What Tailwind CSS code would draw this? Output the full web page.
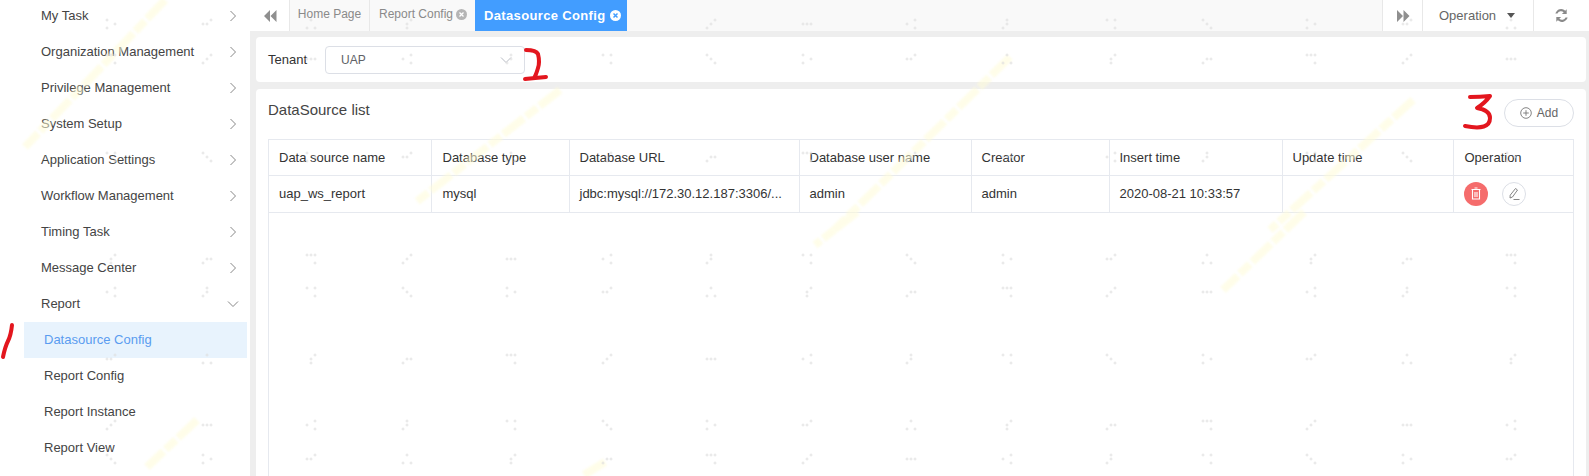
<!DOCTYPE html>
<html lang="en">
<head>
    <meta charset="UTF-8">
    <title>Datasource Config</title>
    <script src="https://cdn.jsdelivr.net/npm/@tailwindcss/browser@4"></script>
</head>
<body class="relative h-[476px] w-[1589px] overflow-hidden bg-[#eeeeee] font-['Liberation_Sans',Arial,sans-serif] text-[13px] text-[#333333]">
    <div class="flex h-[476px]">
        <!-- sidebar -->
        <aside class="w-[250px] shrink-0 overflow-hidden bg-white text-[#444444]">
            <ul class="-mt-[2px] pr-[3px]">
                <li class="flex h-[36px] items-center justify-between pl-[41px] pr-[8px]">My Task<svg class="h-[12px] w-[12px]" viewBox="0 0 12 12"><path d="M3.500 1l5 5-5 5" fill="none" stroke="#888" stroke-width="1"/></svg></li>
                <li class="flex h-[36px] items-center justify-between pl-[41px] pr-[8px]">Organization Management<svg class="h-[12px] w-[12px]" viewBox="0 0 12 12"><path d="M3.500 1l5 5-5 5" fill="none" stroke="#888" stroke-width="1"/></svg></li>
                <li class="flex h-[36px] items-center justify-between pl-[41px] pr-[8px]">Privilege Management<svg class="h-[12px] w-[12px]" viewBox="0 0 12 12"><path d="M3.500 1l5 5-5 5" fill="none" stroke="#888" stroke-width="1"/></svg></li>
                <li class="flex h-[36px] items-center justify-between pl-[41px] pr-[8px]">System Setup<svg class="h-[12px] w-[12px]" viewBox="0 0 12 12"><path d="M3.500 1l5 5-5 5" fill="none" stroke="#888" stroke-width="1"/></svg></li>
                <li class="flex h-[36px] items-center justify-between pl-[41px] pr-[8px]">Application Settings<svg class="h-[12px] w-[12px]" viewBox="0 0 12 12"><path d="M3.500 1l5 5-5 5" fill="none" stroke="#888" stroke-width="1"/></svg></li>
                <li class="flex h-[36px] items-center justify-between pl-[41px] pr-[8px]">Workflow Management<svg class="h-[12px] w-[12px]" viewBox="0 0 12 12"><path d="M3.500 1l5 5-5 5" fill="none" stroke="#888" stroke-width="1"/></svg></li>
                <li class="flex h-[36px] items-center justify-between pl-[41px] pr-[8px]">Timing Task<svg class="h-[12px] w-[12px]" viewBox="0 0 12 12"><path d="M3.500 1l5 5-5 5" fill="none" stroke="#888" stroke-width="1"/></svg></li>
                <li class="flex h-[36px] items-center justify-between pl-[41px] pr-[8px]">Message Center<svg class="h-[12px] w-[12px]" viewBox="0 0 12 12"><path d="M3.500 1l5 5-5 5" fill="none" stroke="#888" stroke-width="1"/></svg></li>
                <li class="flex h-[36px] items-center justify-between pl-[41px] pr-[8px]">Report<svg class="h-[12px] w-[12px]" viewBox="0 0 12 12"><path d="M1 3.500l5 5 5-5" fill="none" stroke="#888" stroke-width="1"/></svg></li>
                <li class="ml-[24px] flex h-[36px] items-center bg-[#e8f3fd] pl-[20px] text-[#5a9cf0]">Datasource Config</li>
                <li class="ml-[24px] flex h-[36px] items-center pl-[20px]">Report Config</li>
                <li class="ml-[24px] flex h-[36px] items-center pl-[20px]">Report Instance</li>
                <li class="ml-[24px] flex h-[36px] items-center pl-[20px]">Report View</li>
            </ul>
        </aside>

        <main class="flex min-w-0 flex-1 flex-col">
            <!-- tab bar -->
            <div class="flex h-[31px] shrink-0 items-stretch bg-[#f9f9f9] text-[12px] text-[#8a8a8a]">
                <div class="flex w-[39px] items-center justify-center bg-white">
                    <svg class="h-[12px] w-[14px]" viewBox="0 0 14 12"><path d="M7 0v12L1 6zM13.500 0v12l-6-6z" fill="#8f8f8f"/></svg>
                </div>
                <div class="flex w-[80px] items-center justify-center border-l border-[#e8e8e8] pb-[3px]">Home Page</div>
                <div class="flex w-[106px] items-center gap-[3px] border-l border-[#e8e8e8] pb-[3px] pl-[9px]">Report Config
                    <svg class="h-[11px] w-[11px]" viewBox="0 0 11 11"><circle cx="5.500" cy="5.500" r="5.500" fill="#b5b5b5"/><path d="M3.500 3.500l4 4M7.500 3.500l-4 4" stroke="#fff" stroke-width="1.300"/></svg>
                </div>
                <div class="flex w-[152px] items-center gap-[4px] bg-[#429dff] pl-[9px] text-[13px] font-bold tracking-[0.35px] text-white">Datasource Config
                    <svg class="h-[11px] w-[11px]" viewBox="0 0 11 11"><circle cx="5.500" cy="5.500" r="5.500" fill="#fff"/><path d="M3.500 3.500l4 4M7.500 3.500l-4 4" stroke="#429dff" stroke-width="1.500"/></svg>
                </div>
                <div class="flex-1"></div>
                <div class="flex w-[40px] items-center justify-center border-l border-[#e8e8e8] bg-white">
                    <svg class="h-[12px] w-[14px]" viewBox="0 0 14 12"><path d="M1 0v12l6-6zM7.500 0v12l6-6z" fill="#8f8f8f"/></svg>
                </div>
                <div class="flex w-[111px] items-center gap-[11px] border-l border-[#e8e8e8] bg-white pl-[16px] text-[13px] text-[#666666]">Operation
                    <svg class="h-[5px] w-[8px]" viewBox="0 0 8 5"><path d="M0 0h8L4 5z" fill="#555"/></svg>
                </div>
                <div class="flex w-[56px] items-center justify-center border-l border-[#e8e8e8] bg-white">
                    <svg class="h-[15px] w-[15px]" viewBox="0 0 13 13"><path d="M11 1v4.200H6.800l1.600-1.500A3.300 3.300 0 0 0 3 4.800H1.200A5.200 5.200 0 0 1 9.700 2.300zM2 12V7.800h4.200l-1.600 1.500A3.300 3.300 0 0 0 10 8.200h1.800a5.200 5.200 0 0 1-8.500 2.500z" fill="#8a8a8a"/></svg>
                </div>
            </div>

            <div class="flex min-h-0 flex-1 flex-col gap-[7px] pb-0 pl-[6px] pr-[3px] pt-[6px]">
                <!-- tenant filter -->
                <div class="flex h-[45px] shrink-0 items-center rounded-[4px] bg-white pl-[12px]">
                    <span class="w-[57px]">Tenant</span>
                    <div class="flex h-[28px] w-[200px] items-center justify-between rounded-[4px] border border-[#dcdfe6] pl-[15px] pr-[12px] text-[12px] text-[#606266]">UAP
                        <svg class="h-[8px] w-[12px]" viewBox="0 0 12 8"><path d="M1 1.500l5 5 5-5" fill="none" stroke="#b8bcc4" stroke-width="1"/></svg>
                    </div>
                </div>

                <!-- list -->
                <section class="flex min-h-0 flex-1 flex-col rounded-t-[4px] bg-white px-[12px]">
                    <div class="flex h-[50px] shrink-0 items-start justify-between pt-[10px]">
                        <h2 class="pt-[1px] text-[15px] leading-[20px] text-[#444444]">DataSource list</h2>
                        <button class="flex h-[28px] w-[70px] items-center justify-center gap-[5px] rounded-full border border-[#dcdfe6] text-[12px] text-[#666666]">
                            <svg class="h-[12px] w-[12px]" viewBox="0 0 12 12"><circle cx="6" cy="6" r="5.300" fill="none" stroke="#777" stroke-width="0.900"/><path d="M6 3.200v5.600M3.200 6h5.600" stroke="#777" stroke-width="0.900"/></svg>
                            Add
                        </button>
                    </div>
                    <div class="min-h-0 flex-1 border-x border-t border-[#e6e9ef]">
                        <table class="w-[1304px] table-fixed border-collapse">
                            <colgroup>
                                <col class="w-[162px]"><col class="w-[138px]"><col class="w-[230px]"><col class="w-[172px]"><col class="w-[138px]"><col class="w-[173px]"><col class="w-[171px]"><col class="w-[120px]">
                            </colgroup>
                            <thead>
                                <tr class="h-[35px] border-b border-[#e6e9ef] text-left">
                                    <th class="border-r border-[#e6e9ef] pl-[10px] font-normal">Data source name</th>
                                    <th class="border-r border-[#e6e9ef] pl-[11px] font-normal">Database type</th>
                                    <th class="border-r border-[#e6e9ef] pl-[10px] font-normal">Database URL</th>
                                    <th class="border-r border-[#e6e9ef] pl-[10px] font-normal">Database user name</th>
                                    <th class="border-r border-[#e6e9ef] pl-[10px] font-normal">Creator</th>
                                    <th class="border-r border-[#e6e9ef] pl-[10px] font-normal">Insert time</th>
                                    <th class="border-r border-[#e6e9ef] pl-[10px] font-normal">Update time</th>
                                    <th class="pl-[11px] font-normal">Operation</th>
                                </tr>
                            </thead>
                            <tbody>
                                <tr class="h-[37px] border-b border-[#e6e9ef]">
                                    <td class="border-r border-[#e6e9ef] pl-[10px]">uap_ws_report</td>
                                    <td class="border-r border-[#e6e9ef] pl-[11px]">mysql</td>
                                    <td class="border-r border-[#e6e9ef] pl-[10px]">jdbc:mysql://172.30.12.187:3306/...</td>
                                    <td class="border-r border-[#e6e9ef] pl-[10px]">admin</td>
                                    <td class="border-r border-[#e6e9ef] pl-[10px]">admin</td>
                                    <td class="border-r border-[#e6e9ef] pl-[10px]">2020-08-21 10:33:57</td>
                                    <td class="border-r border-[#e6e9ef]"></td>
                                    <td class="pl-[10px]">
                                        <div class="flex items-center gap-[14px]">
                                            <span class="flex h-[24px] w-[24px] items-center justify-center rounded-full bg-[#f56c6c]">
                                                <svg class="h-[13px] w-[12px]" viewBox="0 0 12 13"><path d="M4.500 1h3M1.500 2.500h9M2.500 2.500v9.500h7V2.500M5 5v5M7 5v5" fill="none" stroke="#fff" stroke-width="1.100"/></svg>
                                            </span>
                                            <span class="flex h-[24px] w-[24px] items-center justify-center rounded-full border border-[#dcdfe6]">
                                                <svg class="h-[14px] w-[14px]" viewBox="0 0 14 14"><path d="M8.500 1.500l2 1.500-5 7-2.500 1 .2-2.800zM6.500 12.500h6" fill="none" stroke="#777" stroke-width="0.900"/></svg>
                                            </span>
                                        </div>
                                    </td>
                                </tr>
                            </tbody>
                        </table>
                    </div>
                </section>
            </div>
        </main>
    </div>

    <!-- watermark and pen marks that lie over the whole shot -->
    <svg id="overlay" class="pointer-events-none absolute left-0 top-0 h-[476px] w-[1589px]" viewBox="0 0 1589 476">
        <g id="streaks" class="blur-[1px]" fill="none" stroke="#fffcd8" stroke-width="8" stroke-dasharray="26 3 14 3" opacity="0.55">
            <path d="M165 0L25 147"/><path d="M197 420L147 467"/>
            <path d="M560 90L415 203"/><path d="M605 462L584 475"/>
            <path d="M1010 57L834 230"/><path d="M857 212L815 245"/>
            <path d="M1304 212L1223 290"/><path d="M1413 100L1270 230"/>
        </g>
        <g id="dots" stroke="#dedede" stroke-width="0.800"></g>
        <g fill="none" stroke="#e3161e" stroke-width="4" stroke-linecap="round" stroke-linejoin="round">
            <path d="M12 325Q11 335 8 341T3 357"/>
            <path d="M526 50Q536 50 538 54Q540 62 538 68Q536 75 534 78M525 79Q535 78 546 77"/>
            <path d="M1470 97Q1480 97 1490 96Q1485 103 1477 108Q1490 110 1490 118Q1490 131 1465 126"/>
        </g>
    </svg>

    <script>
        // faint three-plus marks of the watermark, on a 100px grid
        const shapes = [
            [[0,0],[0,8],[8,4]], [[0,4],[4,4],[8,0]], [[4,0],[0,8],[8,8]], [[8,0],[4,4],[4,8]],
            [[4,4],[8,4],[0,8]], [[0,0],[4,0],[8,0],[8,8]], [[8,0],[4,4],[0,8]], [[0,4],[4,4],[8,4]],
            [[8,0],[0,4],[8,8]], [[4,0],[4,4],[0,8]], [[0,0],[8,0],[8,8]], [[0,0],[4,4],[8,8]]
        ];
        const rows = [20, 55, 153, 255, 288, 355, 421, 455];
        let d = '';
        rows.forEach((y, r) => {
            for (let i = 0; i < 15; i++) {
                const x = 105 + i * 100 + (i % 2 ? -2 : 2);
                // none on the blue tab
                if (r === 0 && x > 470 && x < 630) continue;
                shapes[(i + r * 5) % shapes.length].forEach(([a, b]) => {
                    d += `M${x + a - 1.5} ${y + b}h3M${x + a} ${y + b - 1.5}v3`;
                });
            }
        });
        const p = document.createElementNS('http://www.w3.org/2000/svg', 'path');
        p.setAttribute('d', d);
        document.getElementById('dots').appendChild(p);
    </script>
</body>
</html>
